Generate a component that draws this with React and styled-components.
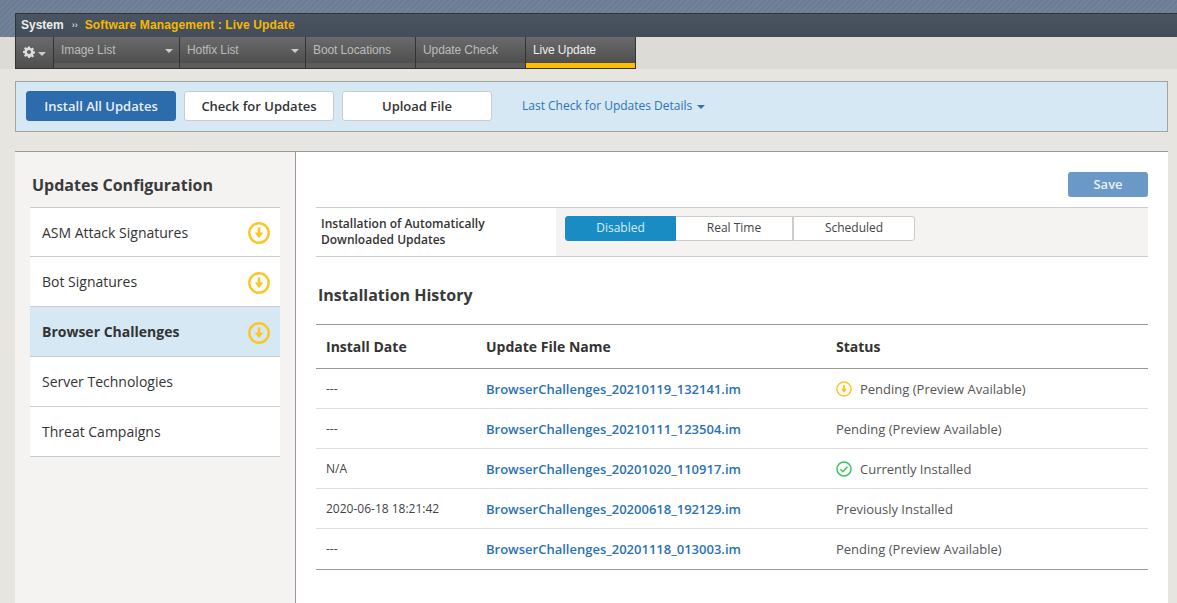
import React from 'react';
import styled, { createGlobalStyle } from 'styled-components';

const Global = createGlobalStyle`
  html, body { margin: 0; padding: 0; height: 100%; overflow: hidden; background: #e6e5e0; }
  body { font-family: "Open Sans", sans-serif; color: #333; }
  * { box-sizing: border-box; }
`;
const Page = styled.div`width: 1177px; height: 603px; overflow: hidden; display: flex; flex-direction: column;`;
const Banner = styled.div`
  height: 37px; padding: 13px 0 0 15px;
  background: repeating-linear-gradient(135deg, #6c7d91 0 2px, #72829a 2px 4px);
`;
const Crumbs = styled.div`
  height: 24px; background: linear-gradient(#4a5561, #434d59); border-top: 1px solid #2f343a;
  border-left: 1px solid #2f343a; display: flex; align-items: center; padding: 0 0 2px 5px;
  font: bold 12px "Liberation Sans", sans-serif; color: #eee;
`;
const Sep = styled.span`margin: 0 7px 0 8px; font-size: 9px; color: #ccc;`;
const Crumb = styled.span`color: #f5b800; letter-spacing: 0.12px;`;
const TabStrip = styled.div`height: 32px; background: #dcdbd6; padding-left: 15px; display: flex;`;
const Tabs = styled.div`display: flex; background: #333; border: 1px solid #333; border-top: 0; gap: 1px;`;
const Tab = styled.div`
  width: ${p => p.$w}px; height: 31px; padding: 6px 0 0 7px; display: flex; justify-content: space-between;
  background: linear-gradient(#6a6a6a, #4f4f4f); border-bottom: 5px solid ${p => p.$active ? '#fdbd00' : '#5c5c5c'};
  font: 12px "Liberation Sans", sans-serif; letter-spacing: -0.1px; color: ${p => p.$active ? '#eee' : '#bbb'};
`;
const Caret = styled.i`
  width: 0; height: 0; border: 4px solid transparent; border-top: 4px solid ${p => p.$c || '#ccc'}; border-bottom: 0;
  display: inline-block; margin: 6px 6px 0 0;
`;
const LinkCaret = styled(Caret)`margin: 2px 0 0;`;
const GearTab = styled(Tab)`padding: 9px 0 0 7px; border-bottom: 0; gap: 3px; justify-content: flex-start;`;
const Toolbar = styled.div`
  margin: 12px 9px 0 15px; height: 51px; background: #d5e8f4; border: 1px solid #a3a3a0; padding: 9px 10px; display: flex; gap: 8px; align-items: flex-start;
`;
const Btn = styled.div`
  width: 150px; height: 30px; border-radius: 3px; display: flex; align-items: center; justify-content: center;
  font-size: 13px; font-weight: 600;
  background: ${p => p.$primary ? '#2c6cac' : '#fff'}; color: ${p => p.$primary ? '#e8eef5' : '#333'};
  border: 1px solid ${p => p.$primary ? '#2c6cac' : '#ccc'};
`;
const Details = styled.div`margin: 6px 0 0 22px; font-size: 12px; color: #2f74b5; display: flex; align-items: center; gap: 5px;`;
const Main = styled.div`
  margin: 19px 9px 0 15px; flex: 1; display: flex; background: #fff; border-top: 1px solid #999;
`;
const Side = styled.div`width: 281px; background: #f4f3f1; border-right: 1px solid #999; padding: 0 15px;`;
const SideTitle = styled.h2`margin: 0; height: 55px; padding: 22px 0 0 2px; font-size: 16px; line-height: 22px; font-weight: 700; color: #3a3a3a;`;
const SideList = styled.div`background: #fff; border-top: 1px solid #ccc;`;
const SideItem = styled.div`
  height: ${p => p.$h}px; padding: 0 10px 0 12px; display: flex; align-items: center; justify-content: space-between;
  border-bottom: 1px solid #ccc; font-size: 14px; color: #333; font-weight: ${p => p.$active ? 700 : 400};
  background: ${p => p.$active ? '#d5e8f4' : '#fff'};
`;
const SideIcon = styled.span`display: flex; padding-top: 2px;`;
const Content = styled.div`flex: 1; padding: 20px 20px 0 20px; display: flex; flex-direction: column;`;
const SaveRow = styled.div`display: flex; justify-content: flex-end; height: 35px;`;
const Save = styled.div`
  width: 80px; height: 25px; padding-bottom: 1px; background: #6b99c7; color: #e8eff6; border-radius: 3px; font-size: 13px; font-weight: 600;
  display: flex; align-items: center; justify-content: center;
`;
const Setting = styled.div`display: flex; height: 50px; border-top: 1px solid #ccc; border-bottom: 1px solid #ccc;`;
const SettingLabel = styled.div`width: 240px; padding: 8px 0 0 5px; font-size: 12px; line-height: 16px; font-weight: 600; color: #333;`;
const SettingValue = styled.div`flex: 1; background: #f4f3f1; padding: 8px 9px; display: flex;`;
const Seg = styled.div`
  width: ${p => p.$w}px; height: 25px; padding-bottom: 2px; display: flex; align-items: center; justify-content: center; font-size: 12px;
  background: ${p => p.$on ? '#1a8cc4' : '#fff'}; color: ${p => p.$on ? '#d7ecf6' : '#444'};
  border: 1px solid ${p => p.$on ? '#1a8cc4' : '#ccc'}; border-left-width: ${p => p.$noLeft ? 0 : 1}px;
  border-radius: ${p => p.$r || '0'};
`;
const HistoryTitle = styled.h3`margin: 0; height: 67px; padding: 27px 0 0 2px; font-size: 16px; line-height: 22px; font-weight: 700; color: #3a3a3a;`;
const Table = styled.div`border-top: 1px solid #999; border-bottom: 1px solid #999; padding-bottom: 1px;`;
const Row = styled.div`
  display: grid; grid-template-columns: 160px 350px 1fr; padding-left: 10px; align-items: center;
  height: 40px; font-size: 12px; color: #444;
  & + & { border-top: 1px solid #ddd; }
`;
const HeadRow = styled(Row)`height: 43px; font-size: 14px; font-weight: 700; color: #333;`;
const HeadNext = styled(Row)`border-top: 1px solid #999 !important;`;
const FileLink = styled.span`font-size: 13px; font-weight: 600; color: #2a72b5;`;
const Status = styled.span`display: flex; align-items: center; gap: 8px; font-size: 13px; color: #555;`;

const Gear = () => (
  <svg width="12" height="12" viewBox="0 0 24 24" fill="#ddd"><path fillRule="evenodd" d="M10 1h4l.6 3.2 1.8.8L19.2 3 22 5.8l-2 2.8.8 1.8 3.2.6v4l-3.2.6-.8 1.8 2 2.8-2.8 2.8-2.8-2-1.8.8L14 24h-4l-.6-3.2-1.8-.8-2.8 2L2 19.200l2-2.800-.8-1.800L0 14v-4l3.200-.6.800-1.800-2-2.800L4.800 2l2.800 2 1.800-.800z M12 8a4 4 0 1 0 0 8 4 4 0 0 0 0-8z"/></svg>
);
const DownIcon = ({ size = 22, sw = 2.4 }) => (
  <svg width={size} height={size} viewBox="0 0 22 22" fill="none"><circle cx="11" cy="11" r="9.700" stroke="#fdc521" strokeWidth={sw}/><path d="M11 5.500v9" stroke="#fdc521" strokeWidth="2.600"/><path d="M6.500 10.500h9L11 16z" fill="#fdc521"/></svg>
);
const CheckIcon = () => (
  <svg width="16" height="16" viewBox="0 0 16 16" fill="none"><circle cx="8" cy="8" r="7" stroke="#3cc35a" strokeWidth="1.500"/><path d="M4.500 8.200l2.500 2.500 4.500-5" stroke="#3cc35a" strokeWidth="1.500"/></svg>
);

const sideItems = [
  ['ASM Attack Signatures', true, 49], ['Bot Signatures', true, 50], ['Browser Challenges', true, 50, true],
  ['Server Technologies', false, 50], ['Threat Campaigns', false, 50],
];
const rows = [
  ['---', 'BrowserChallenges_20210119_132141.im', 'Pending (Preview Available)', 'down'],
  ['---', 'BrowserChallenges_20210111_123504.im', 'Pending (Preview Available)'],
  ['N/A', 'BrowserChallenges_20201020_110917.im', 'Currently Installed', 'check'],
  ['2020-06-18 18:21:42', 'BrowserChallenges_20200618_192129.im', 'Previously Installed'],
  ['---', 'BrowserChallenges_20201118_013003.im', 'Pending (Preview Available)'],
];

export default function App() {
  return (
    <Page>
      <Global />
      <Banner>
        <Crumbs>System<Sep>››</Sep><Crumb>Software Management : Live Update</Crumb></Crumbs>
      </Banner>
      <TabStrip>
        <Tabs>
          <GearTab $w={37}><Gear /><Caret /></GearTab>
          <Tab $w={125}>Image List<Caret /></Tab>
          <Tab $w={125}>Hotfix List<Caret /></Tab>
          <Tab $w={109}>Boot Locations</Tab>
          <Tab $w={109}>Update Check</Tab>
          <Tab $w={109} $active>Live Update</Tab>
        </Tabs>
      </TabStrip>
      <Toolbar>
        <Btn $primary>Install All Updates</Btn>
        <Btn>Check for Updates</Btn>
        <Btn>Upload File</Btn>
        <Details>Last Check for Updates Details <LinkCaret $c="#2f74b5" /></Details>
      </Toolbar>
      <Main>
        <Side>
          <SideTitle>Updates Configuration</SideTitle>
          <SideList>
            {sideItems.map(([t, icon, h, active]) => (
              <SideItem key={t} $h={h} $active={active}>{t}{icon && <SideIcon><DownIcon /></SideIcon>}</SideItem>
            ))}
          </SideList>
        </Side>
        <Content>
          <SaveRow><Save>Save</Save></SaveRow>
          <Setting>
            <SettingLabel>Installation of Automatically<br />Downloaded Updates</SettingLabel>
            <SettingValue>
              <Seg $on $w={111} $r="3px 0 0 3px">Disabled</Seg>
              <Seg $noLeft $w={117}>Real Time</Seg>
              <Seg $w={122} $r="0 3px 3px 0">Scheduled</Seg>
            </SettingValue>
          </Setting>
          <HistoryTitle>Installation History</HistoryTitle>
          <Table>
            <HeadRow><span>Install Date</span><span>Update File Name</span><span>Status</span></HeadRow>
            {rows.map(([d, f, s, ic], i) => {
              const R = i === 0 ? HeadNext : Row;
              return (
                <R key={f}>
                  <span>{d}</span>
                  <FileLink>{f}</FileLink>
                  <Status>{ic === 'down' && <DownIcon size={16} sw={2} />}{ic === 'check' && <CheckIcon />}{s}</Status>
                </R>
              );
            })}
          </Table>
        </Content>
      </Main>
    </Page>
  );
}
